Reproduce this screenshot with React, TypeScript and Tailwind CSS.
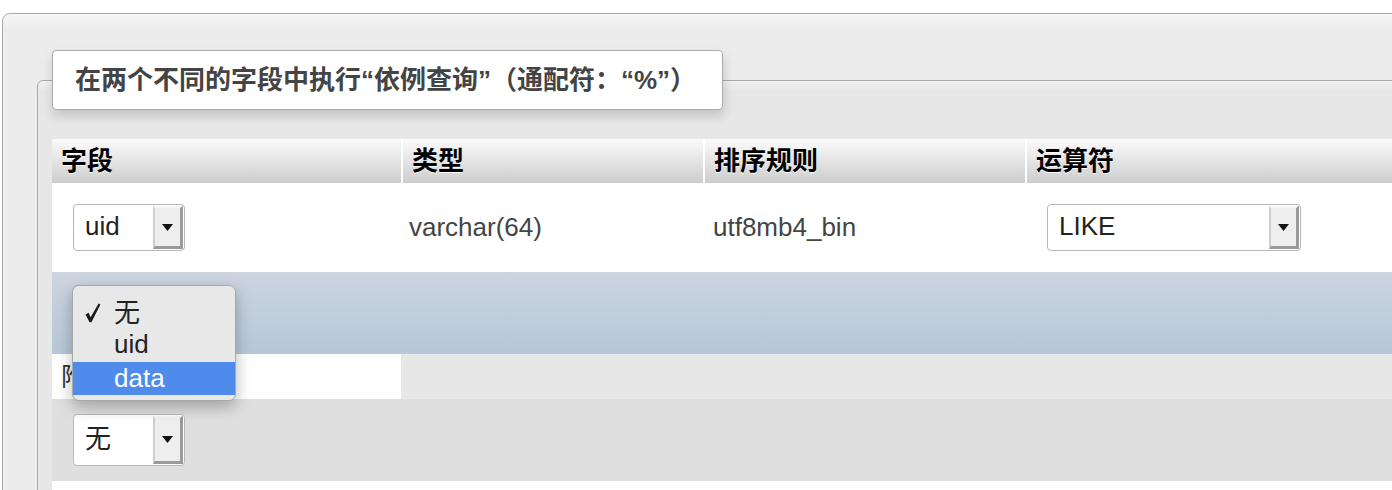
import React from "react";

function Arrow() {
  return (
    <svg width="11" height="7" viewBox="0 0 11 7">
      <polygon points="0,0 11,0 5.5,7" fill="#111" />
    </svg>
  );
}

function Check() {
  return (
    <svg width="16" height="20" viewBox="0 0 16 20">
      <path
        d="M0.5 11.5 L3.6 9.8 L5.6 14.2 L13.6 0.6 L15.4 1.4 L6.4 19.2 L4.6 19.2 Z"
        fill="#1a1a1a"
      />
    </svg>
  );
}

function Sel({ label, w, h }: { label: string; w: string; h: string }) {
  return (
    <div
      className={`flex items-stretch border border-[#b8b8b8] rounded-[4px] bg-white ${w} ${h}`}
    >
      <span className="flex-1 flex items-center pl-[11px] pb-[3px] text-[26px] leading-none text-[#222]">
        {label}
      </span>
      <span className="w-[30px] my-[1px] mr-[1px] bg-[#eeeeee] border-l-2 border-t-2 border-l-[#cfcfcf] border-t-[#f6f6f6] border-r-[3px] border-b-[3px] border-r-[#9a9a9a] border-b-[#9a9a9a] flex items-center justify-center">
        <Arrow />
      </span>
    </div>
  );
}

export default function App() {
  return (
    <div className="w-[1392px] h-[490px] overflow-hidden bg-white font-['Liberation_Sans','Noto_Sans_CJK_SC',sans-serif]">
      <div className="mt-[13px] ml-[2px] w-[1500px] h-[600px] border border-[#aaa] rounded-tl-[8px] bg-[linear-gradient(#f7f7f7,#ececec_14px)] pl-[34px] pt-[36px]">
        <fieldset className="min-w-0 m-0 border border-[#aaa] rounded-tl-[6px] bg-[linear-gradient(#f1f1f1,#e7e7e7_10px)] px-[14px] pt-[29px] pb-0">
          <legend className="w-[671px] h-[60px] p-0 pl-[22px] flex items-center bg-white border border-[#aaa] rounded-[4px] shadow-[1px_6px_12px_rgba(0,0,0,0.16)] text-[#444] font-bold text-[26px] leading-none [text-spacing-trim:space-all]">
            在两个不同的字段中执行“依例查询”（通配符：“%”）
          </legend>

          {/* header */}
          <div className="flex gap-[2px] h-[44px] bg-white">
            {[
              ["字段", "w-[349px]"],
              ["类型", "w-[300px]"],
              ["排序规则", "w-[320px]"],
              ["运算符", "flex-1"],
            ].map(([t, w]) => (
              <div
                key={t}
                className={`${w} flex items-center pl-[9px] bg-[linear-gradient(#fbfbfb,#cdcdcd)] text-black font-bold text-[26px] leading-none [text-shadow:0_1px_0_#fff]`}
              >
                {t}
              </div>
            ))}
          </div>

          {/* row 1 */}
          <div className="flex gap-[2px] h-[89px] bg-white items-center text-[26px] leading-none text-[#444]">
            <div className="w-[349px] pl-[21px]">
              <Sel label="uid" w="w-[112px]" h="h-[47px]" />
            </div>
            <div className="w-[300px] pl-[6px] pb-[2px]">varchar(64)</div>
            <div className="w-[320px] pl-[8px] pb-[2px]">utf8mb4_bin</div>
            <div className="flex-1 pl-[20px]">
              <Sel label="LIKE" w="w-[254px]" h="h-[47px]" />
            </div>
          </div>

          {/* row 2 */}
          <div className="flex h-[82px] bg-[linear-gradient(#cdd5e0,#b6c7d9)]">
            <div className="w-[349px] pl-[21px] pt-[13px]">
              <div className="relative w-[112px]">
                <Sel label="无" w="w-[112px]" h="h-[52px]" />
                <div className="absolute left-[-1px] top-0 z-10 w-[164px] rounded-[7px] border border-[#a8a8a8] bg-[#e8e8e8] shadow-[0_6px_16px_rgba(0,0,0,0.28)] pt-[10px] pb-[5px] text-[26px] leading-none text-[#222]">
                  <div className="h-[33px] flex items-center">
                    <span className="w-[41px] pl-[12px] flex items-center">
                      <Check />
                    </span>
                    <span>无</span>
                  </div>
                  <div className="h-[33px] flex items-center pb-[3px]">
                    <span className="w-[41px]" />
                    <span>uid</span>
                  </div>
                  <div className="h-[33px] flex items-center bg-[#4f8bea] text-white pb-[2px]">
                    <span className="w-[41px]" />
                    <span>data</span>
                  </div>
                </div>
              </div>
            </div>
          </div>

          {/* row 3 */}
          <div className="flex gap-[2px] h-[45px]">
            <div className="w-[349px] bg-white flex items-center pl-[9px] text-[26px] leading-none text-[#333]">
              附加
            </div>
          </div>

          {/* row 4 */}
          <div className="flex h-[82px] bg-[#dfdfdf] items-center">
            <div className="w-[349px] pl-[21px]">
              <Sel label="无" w="w-[112px]" h="h-[52px]" />
            </div>
          </div>

          {/* row 5 */}
          <div className="h-[60px] bg-white" />
        </fieldset>
      </div>
    </div>
  );
}
